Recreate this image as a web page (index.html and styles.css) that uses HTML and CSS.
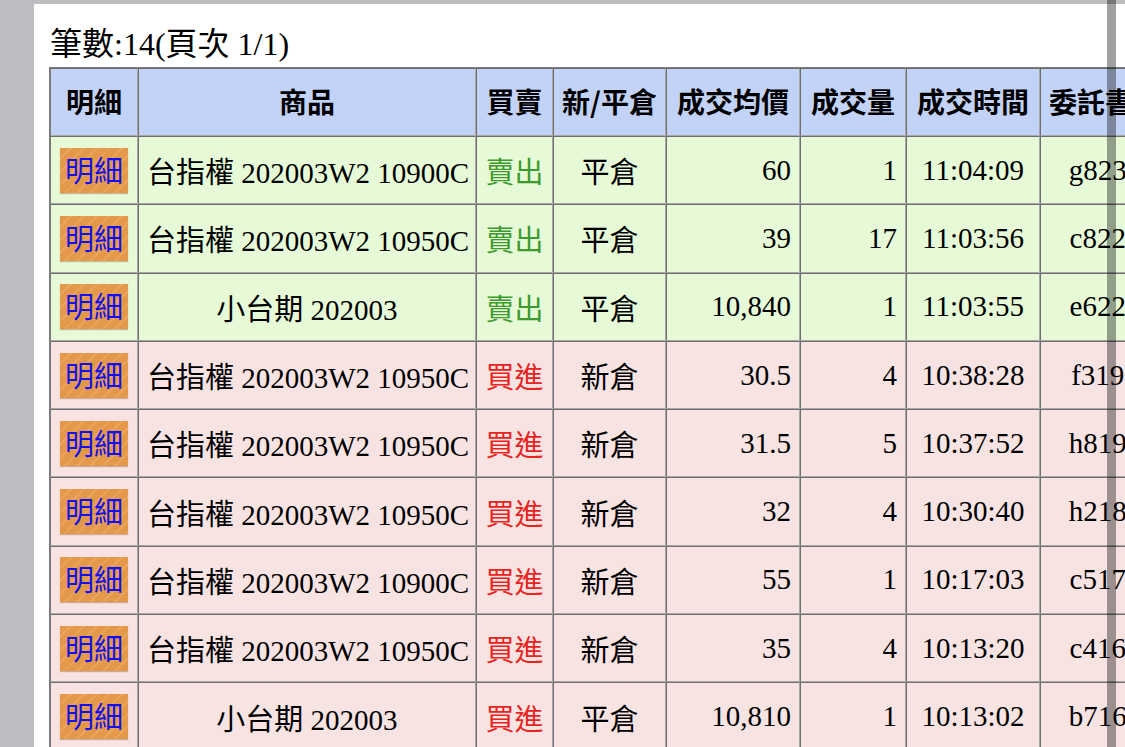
FILE: index.html
```html
<!DOCTYPE html>
<html lang="zh-Hant">
<head>
<meta charset="utf-8">
<title>成交明細</title>
<link rel="stylesheet" href="styles.css">
</head>
<body>
<div class="panel">
  <div class="title">筆數:14(頁次 1/1)</div>
  <table class="grid">
    <colgroup>
      <col class="c1"><col class="c2"><col class="c3"><col class="c4"><col class="c5"><col class="c6"><col class="c7"><col class="c8">
    </colgroup>
    <thead>
      <tr><th>明細</th><th>商品</th><th>買賣</th><th>新/平倉</th><th>成交均價</th><th>成交量</th><th>成交時間</th><th>委託書號</th></tr>
    </thead>
    <tbody>
      <tr class="sell"><td><span class="btn">明細</span></td><td>台指權 202003W2 10900C</td><td class="bs">賣出</td><td>平倉</td><td class="num">60</td><td class="num">1</td><td>11:04:09</td><td>g8231</td></tr>
      <tr class="sell"><td><span class="btn">明細</span></td><td>台指權 202003W2 10950C</td><td class="bs">賣出</td><td>平倉</td><td class="num">39</td><td class="num">17</td><td>11:03:56</td><td>c8226</td></tr>
      <tr class="sell"><td><span class="btn">明細</span></td><td>小台期 202003</td><td class="bs">賣出</td><td>平倉</td><td class="num">10,840</td><td class="num">1</td><td>11:03:55</td><td>e6228</td></tr>
      <tr class="buy"><td><span class="btn">明細</span></td><td>台指權 202003W2 10950C</td><td class="bs">買進</td><td>新倉</td><td class="num">30.5</td><td class="num">4</td><td>10:38:28</td><td>f3190</td></tr>
      <tr class="buy"><td><span class="btn">明細</span></td><td>台指權 202003W2 10950C</td><td class="bs">買進</td><td>新倉</td><td class="num">31.5</td><td class="num">5</td><td>10:37:52</td><td>h8195</td></tr>
      <tr class="buy"><td><span class="btn">明細</span></td><td>台指權 202003W2 10950C</td><td class="bs">買進</td><td>新倉</td><td class="num">32</td><td class="num">4</td><td>10:30:40</td><td>h2183</td></tr>
      <tr class="buy"><td><span class="btn">明細</span></td><td>台指權 202003W2 10900C</td><td class="bs">買進</td><td>新倉</td><td class="num">55</td><td class="num">1</td><td>10:17:03</td><td>c5172</td></tr>
      <tr class="buy"><td><span class="btn">明細</span></td><td>台指權 202003W2 10950C</td><td class="bs">買進</td><td>新倉</td><td class="num">35</td><td class="num">4</td><td>10:13:20</td><td>c4164</td></tr>
      <tr class="buy"><td><span class="btn">明細</span></td><td>小台期 202003</td><td class="bs">買進</td><td>平倉</td><td class="num">10,810</td><td class="num">1</td><td>10:13:02</td><td>b7168</td></tr>
    </tbody>
  </table>
</div>
<div class="scrollbar"></div>
</body>
</html>
```
FILE: styles.css
```css
html, body {
  margin: 0;
  height: 747px;
  overflow: hidden;
}
body {
  background: #bdbdc2;
  padding: 4px 0 0 34px;
  box-sizing: border-box;
  position: relative;
  font-family: "Liberation Serif", "Noto Sans CJK TC", serif;
  color: #000;
}
.panel {
  background: #fff;
  width: 1250px;
  height: 800px;
  padding: 20px 0 0 15px;
  box-sizing: border-box;
}
.title {
  font-size: 32px;
  line-height: 40px;
  margin: 0 0 3px 1px;
  white-space: nowrap;
}
.grid {
  table-layout: fixed;
  border-collapse: separate;
  border-spacing: 0;
  border: 1px solid #7a7a7a;
  border-right: 0;
  width: 1121px;
  font-size: 29px;
}
.c1 { width: 88px; }
.c2 { width: 338px; }
.c3 { width: 77px; }
.c4 { width: 113px; }
.c5 { width: 134px; }
.c6 { width: 106px; }
.c7 { width: 134px; }
.c8 { width: 130px; }
.grid th, .grid td {
  border-style: solid;
  border-width: 1px;
  border-color: #6e6e6e #a8a8a8 #a8a8a8 #6e6e6e;
  padding: 0 8px;
  text-align: center;
  white-space: nowrap;
  overflow: hidden;
}
.grid th {
  background: #c3d3f7;
  font-family: "Noto Sans CJK TC", sans-serif;
  font-weight: 700;
  font-size: 28px;
  height: 68px;
  box-sizing: border-box;
  padding: 0 4px 3px;
}
.grid td {
  height: 68.3px;
  box-sizing: border-box;
}
.grid th:first-child, .grid td:first-child { border-left-color: #7a7a7a; padding: 0; }
.grid th:first-child { padding-bottom: 3px; }
.sell td { background: #e6fad8; }
.buy td { background: #f8e3e3; }
.grid td.num { text-align: right; }
.sell .bs { color: #3f9a2e; }
.buy .bs { color: #e8241f; }
.bs { font-family: "Noto Sans CJK TC", sans-serif; }
.btn {
  display: inline-block;
  width: 68px;
  height: 45px;
  line-height: 43px;
  background: repeating-linear-gradient(135deg, #e3984a 0 7px, #eaa45b 7px 9px);
  color: #1010f0;
  font-family: "Noto Sans CJK TC", sans-serif;
  font-size: 29px;
  box-shadow: 0 1px 1px rgba(120, 70, 20, 0.35);
  vertical-align: middle;
}
.scrollbar {
  position: absolute;
  left: 1107px;
  top: 0;
  width: 9px;
  height: 747px;
  background: rgba(0, 0, 0, 0.37);
}
```
